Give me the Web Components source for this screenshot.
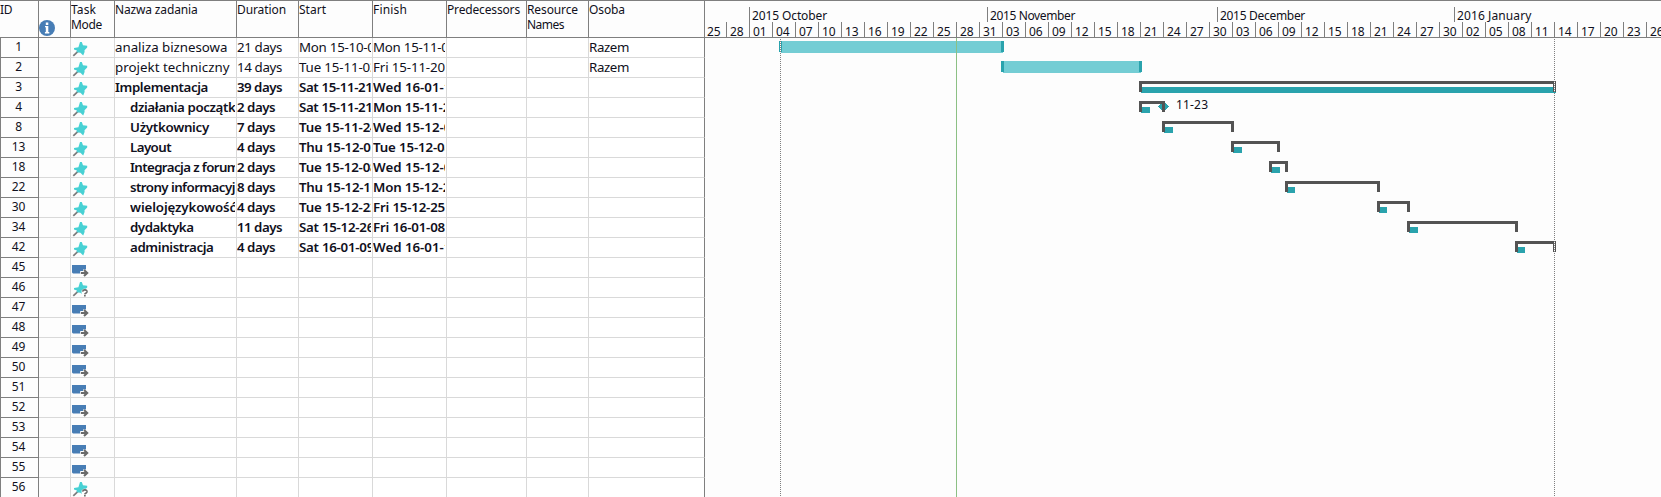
<!DOCTYPE html>
<html lang="pl">
<head>
<meta charset="utf-8">
<title>Project plan</title>
<style>
html,body{margin:0;height:497px;overflow:hidden;background:#fdfdfd;font-family:"Noto Sans","Open Sans",sans-serif;color:#101020}
</style>
</head>
<body>
<project-view></project-view>
<script>
/* One line of text whose letter spacing is adjusted to a given width. */
class FitText extends HTMLElement{
  connectedCallback(){
    if(this.shadowRoot)return;
    const root=this.attachShadow({mode:'open'});
    root.innerHTML='<style>:host{display:block;white-space:pre;line-height:inherit}span{display:inline-block}</style><span><slot></slot></span>';
    const span=root.querySelector('span');
    const w=parseFloat(this.getAttribute('w'));
    const n=this.textContent.length;
    if(w&&n)span.style.letterSpacing=((w-span.getBoundingClientRect().width)/n).toFixed(3)+'px';
  }
}
customElements.define('fit-text',FitText);

class TaskIcon extends HTMLElement{
  connectedCallback(){
    const kind=this.getAttribute('kind');
    const pin='<path d="M1.3 14.8L6.5 9.8" stroke="#7b7b7b" stroke-width="1.7" fill="none"/><path d="M8 1H9.8L11 4.2L15.2 4.8V6.6L12.5 9.2L12.6 11L11.2 14.4L8.4 11.8L4.6 11.2L4.9 9.6L2 8.4V7L6.4 6.2Z" fill="#48d1d4"/>';
    const art={
      pin,
      ask:pin+'<path d="M9.6 9.4L11.6 7.8H17V17H9.4Z" fill="#fff"/><path d="M10.6 10.6C10.9 8.2 15.3 8.2 15 10.9C14.8 12.3 12.9 12.1 12.8 13.4" fill="none" stroke="#6c6c6c" stroke-width="1.6"/><path d="M12 14h1.7v1.5H12z" fill="#6c6c6c"/>',
      auto:'<path d="M0 4h14v6H9v2.5H1L0 11.5z" fill="#477db5"/><path d="M8 10.2h3V8.4h3.2l2.8 2V16H8z" fill="#fff"/><path d="M8.8 12h6M12 9L15.2 12L12 15" fill="none" stroke="#6a6a6a" stroke-width="2.1"/>',
      info:'<circle cx="8" cy="8" r="8" fill="#477db5"/><path d="M6.8 2.6h2.5v2.3H6.8zM6 6h3.3v6.1h1v1.3H5.9v-1.3h.9V7.3H6z" fill="#fff"/>'
    }[kind];
    this.attachShadow({mode:'open'}).innerHTML=`<style>:host{display:block;width:17px;height:17px}svg{display:block}</style><svg width="17" height="17" viewBox="0 0 17 17">${art}</svg>`;
  }
}
customElements.define('task-icon',TaskIcon);

const COLUMNS='39px 32px 44px 122px 62px 74px 74px 80px 62px 116px';

class SheetHead extends HTMLElement{
  connectedCallback(){
    this.attachShadow({mode:'open'}).innerHTML=`<style>
      :host{display:grid;grid-template-columns:${COLUMNS};grid-template-rows:36px;height:38px;box-sizing:border-box;border-top:1px solid #7f7f7f;border-bottom:1px solid #7f7f7f;background:#fdfdfd;font-size:12px;line-height:15px}
      div{box-sizing:border-box;border-right:1px solid #7f7f7f;padding:1px 0 0;overflow:hidden}
      div:first-child{border-left:1px solid #7f7f7f}
      .i{padding:19px 0 0}
      </style>
      <div><fit-text w="12">ID</fit-text></div>
      <div class="i"><task-icon kind="info"></task-icon></div>
      <div><fit-text w="25">Task</fit-text><fit-text w="31">Mode</fit-text></div>
      <div><fit-text w="82.5">Nazwa zadania</fit-text></div>
      <div><fit-text w="49">Duration</fit-text></div>
      <div><fit-text w="27">Start</fit-text></div>
      <div><fit-text w="34">Finish</fit-text></div>
      <div><fit-text w="73">Predecessors</fit-text></div>
      <div><fit-text w="51">Resource</fit-text><fit-text w="37">Names</fit-text></div>
      <div><fit-text w="36">Osoba</fit-text></div>`;
  }
}
customElements.define('sheet-head',SheetHead);

class SheetRow extends HTMLElement{
  set task(t){
    const cell=c=>c?`<div><fit-text w="${c[1]}">${c[0]}</fit-text></div>`:'<div></div>';
    const style=t.level===0?'':t.level===2?'sum sub':'sum';
    this.attachShadow({mode:'open'}).innerHTML=`<style>
      :host{display:grid;grid-template-columns:${COLUMNS};height:20px;background:#fff;font-size:13.3px;line-height:19px}
      div{box-sizing:border-box;height:20px;border-right:1px solid #d9d9d9;border-bottom:1px solid #d9d9d9;padding-right:1px;overflow:hidden}
      fit-text{overflow:hidden}
      .id{border:solid #7f7f7f;border-width:0 1px 1px;background:#fdfdfd;font-size:12px;font-weight:400;line-height:17px;text-align:center;padding:0 2px 0 0}
      .gap{background:#fdfdfd}
      .icon{padding:3px 0 0 1px;background:#fdfdfd}
      .last{border-right-color:#7f7f7f}
      .row{display:contents}
      .sum{font-weight:600}
      .sub .name{padding-left:15px}
      </style><div class="row ${style}"><div class="id"><fit-text w="${t.id.length===1?6.6:13.3}">${t.id}</fit-text></div><div class="gap"></div><div class="icon"><task-icon kind="${t.icon}"></task-icon></div>${
      cell(t.name).replace('<div','<div class="name"')}${cell(t.dur)}${cell(t.start)}${cell(t.end)}${cell()}${cell()}${cell(t.who).replace('<div','<div class="last"')}</div>`;
  }
}
customElements.define('sheet-row',SheetRow);

const TASKS=[
 ['1',0,'analiza biznesowa',112.5,'21 days',45,'Mon 15-10-05',83,'Mon 15-11-02',83,'Razem'],
 ['2',0,'projekt techniczny',114.5,'14 days',45,'Tue 15-11-03',78.5,'Fri 15-11-20',72,'Razem'],
 ['3',1,'Implementacja',93,'39 days',45,'Sat 15-11-21',73.5,'Wed 16-01-13',86],
 ['4',2,'działania początkowe',131,'2 days',38,'Sat 15-11-21',73.5,'Mon 15-11-23',84.5],
 ['8',2,'Użytkownicy',79,'7 days',38,'Tue 15-11-24',78.5,'Wed 15-12-02',86],
 ['13',2,'Layout',41,'4 days',38,'Thu 15-12-03',79,'Tue 15-12-08',79],
 ['18',2,'Integracja z forum',109,'2 days',38,'Tue 15-12-08',78.5,'Wed 15-12-09',86],
 ['22',2,'strony informacyjne',120,'8 days',38,'Thu 15-12-10',79,'Mon 15-12-21',84.5],
 ['30',2,'wielojęzykowość',106,'4 days',38,'Tue 15-12-22',78.5,'Fri 15-12-25',72],
 ['34',2,'dydaktyka',63.5,'11 days',45,'Sat 15-12-26',75,'Fri 16-01-08',72],
 ['42',2,'administracja',83.5,'4 days',38,'Sat 16-01-09',75,'Wed 16-01-13',86]
].map(a=>({id:a[0],level:a[1],icon:'pin',name:[a[2],a[3]],dur:[a[4],a[5]],start:[a[6],a[7]],end:[a[8],a[9]],who:a[10]&&[a[10],40]}));
for(let n=45;n<=56;n++)TASKS.push({id:String(n),level:0,icon:n===46||n===56?'ask':'auto'});

class TaskSheet extends HTMLElement{
  connectedCallback(){
    const root=this.attachShadow({mode:'open'});
    root.innerHTML='<style>:host{display:block;width:705px;flex:none}</style><sheet-head></sheet-head>';
    for(const t of TASKS){const row=document.createElement('sheet-row');root.append(row);row.task=t;}
  }
}
customElements.define('task-sheet',TaskSheet);

class TimeScale extends HTMLElement{
  connectedCallback(){
    const months=[['2015 October',238,75],['2015 November',230,85],['2015 December',237,85],['2016 January',207,74.5]];
    let days=[];
    const d=new Date(Date.UTC(2015,8,25));
    for(let i=0;i<42;i++){days.push(String(d.getUTCDate()).padStart(2,'0'));d.setUTCDate(d.getUTCDate()+3);}
    this.attachShadow({mode:'open'}).innerHTML=`<style>
      :host{display:block;box-sizing:border-box;height:38px;border-top:1px solid #7f7f7f;border-bottom:1px solid #7f7f7f;overflow:hidden;font-size:12px}
      .m,.d{display:flex}
      .m{padding:6px 0 0 44px;height:15px}
      .m div{flex:none;box-sizing:border-box;border-left:1px solid #7f7f7f;padding-left:2px;line-height:18px;height:15px}
      .d{height:15px}
      .d div{flex:none;box-sizing:border-box;width:23px;border-left:1px solid #7f7f7f;padding-left:3px;line-height:19px;height:15px}
      .d div:first-child{width:21px;border:0;padding-left:2px}
      </style><div class="m">${months.map(m=>`<div style="width:${m[1]}px"><fit-text w="${m[2]}">${m[0]}</fit-text></div>`).join('')}</div>
      <div class="d">${days.map(x=>`<div><fit-text w="13.6">${x}</fit-text></div>`).join('')}</div>`;
  }
}
customElements.define('time-scale',TimeScale);

/* Bars, in window coordinates: the view box starts at the canvas corner. */
class GanttCanvas extends HTMLElement{
  connectedCallback(){
    const r=(x1,y1,x2,y2,f)=>`<rect x="${x1}" y="${y1}" width="${x2-x1}" height="${y2-y1}" fill="${f}"/>`;
    const dark='#2aa3ad',light='#74cdd4',line='#535353';
    const bar=(a,b,y)=>r(a+2,y,b-1,y+12,light)+r(a,y,a+3,y+11,dark)+r(b-3,y,b,y+11,dark);
    const bracket=(a,b,y,f)=>r(a+2,y+6,f,y+12,dark)+r(a,y,b,y+3,line)+r(a,y,a+3,y+11,line)+r(b-3,y,b,y+11,line);
    const dots=(x,y1,y2,c)=>`<path d="M${x+.5} ${y1}V${y2}" stroke="${c}" stroke-dasharray="1 1"/>`;
    const sums=[[1139,1556,1556],[1139,1165,1150],[1162,1234,1173],[1231,1280,1242],[1269,1288,1280],[1285,1380,1295],[1377,1410,1387],[1407,1518,1418],[1515,1556,1525]];
    this.attachShadow({mode:'open'}).innerHTML=`<style>:host{display:block}svg{display:block}text{font-size:12px;fill:#101020}</style>
      <svg width="956" height="459" viewBox="705 38 956 459" shape-rendering="crispEdges">
      ${bar(779,1004,41)}${bar(1001,1142,61)}
      <path d="M1163.5 101L1169 106.5L1163.5 112L1158 106.5Z" fill="${dark}"/>
      ${sums.map((s,i)=>bracket(s[0],s[1],81+20*i,s[2])).join('')}
      <text x="1176" y="109" textLength="32">11-23</text>
      ${r(956,38,957,497,'#8cc084')}
      ${dots(780,39,497,'#7f7f7f')}${dots(1554,39,497,'#7f7f7f')}
      ${dots(780,42,52,'#fff')}${dots(1554,82,92,'#fff')}${dots(1554,242,252,'#fff')}
      </svg>`;
  }
}
customElements.define('gantt-canvas',GanttCanvas);

class ProjectView extends HTMLElement{
  connectedCallback(){
    this.attachShadow({mode:'open'}).innerHTML='<style>:host{display:flex;width:1661px;height:497px;overflow:hidden;background:#fdfdfd}.chart{flex:1;min-width:0}</style><task-sheet></task-sheet><div class="chart"><time-scale></time-scale><gantt-canvas></gantt-canvas></div>';
  }
}
customElements.define('project-view',ProjectView);
</script>
</body>
</html>
